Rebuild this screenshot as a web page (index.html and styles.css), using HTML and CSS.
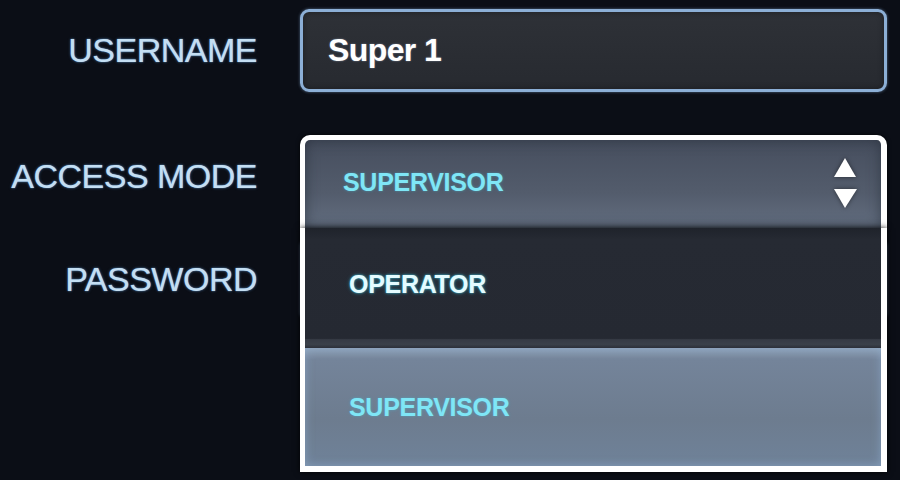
FILE: index.html
```html
<!DOCTYPE html>
<html lang="en">
<head>
<meta charset="utf-8">
<title>Login</title>
<link rel="stylesheet" href="styles.css">
</head>
<body>
<form class="login">
  <div class="row row-user">
    <label class="label">USERNAME</label>
    <div class="input"><span class="input-value">Super 1</span></div>
  </div>
  <div class="row row-access">
    <label class="label">ACCESS MODE</label>
    <div class="select">
      <div class="select-head">
        <span class="opt-text">SUPERVISOR</span>
        <svg class="arrows" width="25" height="52" viewBox="0 0 25 52" aria-hidden="true">
          <polygon points="12,1 1,20 23,20" fill="#ffffff"/>
          <polygon points="1,32 24,32 12,51" fill="#ffffff"/>
        </svg>
      </div>
      <ul class="options">
        <li class="option"><span class="opt-text opt-light">OPERATOR</span></li>
        <li class="option option-active"><span class="opt-text">SUPERVISOR</span></li>
      </ul>
    </div>
  </div>
  <div class="row row-pass">
    <label class="label">PASSWORD</label>
    <div class="input"></div>
  </div>
</form>
</body>
</html>
```
FILE: styles.css
```css
html, body {
  margin: 0;
  padding: 0;
}
body {
  width: 900px;
  height: 480px;
  overflow: hidden;
  background: #0b0e16;
  font-family: "Liberation Sans", Arial, sans-serif;
}
.login {
  display: flex;
  flex-direction: column;
  padding-top: 9px;
}
.row {
  display: flex;
  align-items: flex-start;
  gap: 43px;
}
.row-access {
  margin-top: 43px;
  position: relative;
  z-index: 2;
}
.row-pass {
  margin-top: 10px;
}
.label {
  width: 257px;
  flex: none;
  text-align: right;
  font-size: 34px;
  letter-spacing: -0.5px;
  line-height: 38px;
  margin-top: 22px;
  color: #c4def2;
  text-shadow: 0 0 1px #6fa6d6, 0 0 3px rgba(90, 150, 210, 0.6);
}
.input {
  width: 587px;
  height: 83px;
  box-sizing: border-box;
  border: 3px solid #8cafd6;
  border-radius: 9px;
  background: linear-gradient(#2e3137, #272a30);
  box-shadow: 0 0 3px rgba(140, 180, 225, 0.55), inset 0 0 6px rgba(0, 0, 0, 0.35);
  display: flex;
  align-items: center;
  padding-left: 25px;
}
.input-value {
  font-size: 32px;
  font-weight: bold;
  letter-spacing: -0.6px;
  color: #ffffff;
  text-shadow: 0 0 2px rgba(200, 220, 255, 0.5);
}
.select {
  position: relative;
  width: 587px;
}
.select-head {
  height: 93px;
  box-sizing: border-box;
  border: 5px solid #ffffff;
  border-right-width: 6px;
  border-bottom: 0;
  border-radius: 10px 10px 0 0;
  background: linear-gradient(#464e5e, #535c6c 60%, #636e80);
  box-shadow: inset 0 0 14px rgba(30, 36, 48, 0.55), 0 0 4px rgba(0, 0, 0, 0.8);
  display: flex;
  align-items: center;
  justify-content: space-between;
  padding: 0 23px 4px 38px;
}
.arrows {
  display: block;
  margin-top: 2px;
  filter: drop-shadow(0 0 2px rgba(0, 0, 0, 0.5));
}
.opt-text {
  font-size: 25px;
  font-weight: bold;
  letter-spacing: -0.3px;
  color: #7fe6f6;
  text-shadow: 0 0 3px rgba(60, 200, 230, 0.45);
}
.opt-light {
  color: #e4fbff;
  text-shadow: 0 0 2px #3fc6e0, 0 0 4px rgba(60, 200, 230, 0.4);
}
.options {
  position: absolute;
  top: 100%;
  left: 0;
  right: 0;
  margin: 0;
  padding: 0;
  list-style: none;
  border: 5px solid #ffffff;
  border-right-width: 6px;
  border-bottom-width: 6px;
  border-top: 0;
  box-shadow: 0 0 6px rgba(0, 0, 0, 0.9);
}
.option {
  height: 120px;
  box-sizing: border-box;
  display: flex;
  align-items: center;
  padding-left: 44px;
  padding-bottom: 8px;
  background: linear-gradient(#1f232b, #262a33 10%, #252932 92%, #363b45 93%, #3b414a 97%, #2c3039);
}
.option-active {
  height: 118px;
  padding-bottom: 0;
  background: linear-gradient(#8da0b6, #74849a 10%, #6d7c8f 60%, #6f8299);
  box-shadow: inset 0 0 10px rgba(150, 180, 215, 0.55);
}
```
